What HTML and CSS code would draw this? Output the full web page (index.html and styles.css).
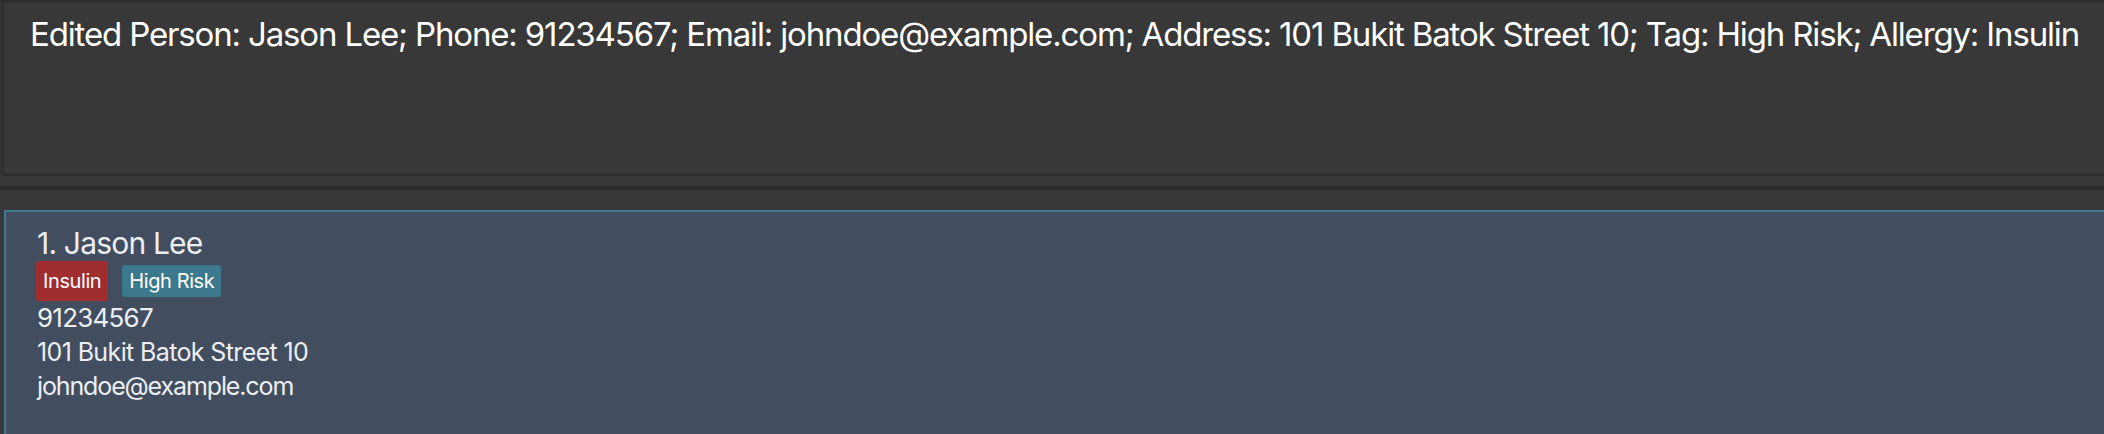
FILE: index.html
```html
<!DOCTYPE html>
<html>
<head>
<meta charset="utf-8">
<link rel="stylesheet" href="styles.css">
</head>
<body>
<div class="topline"></div>
<div class="result-area">
  <div class="result-box">
    <div class="result-text">Edited Person: Jason Lee; Phone: 91234567; Email: johndoe@example.com; Address: 101 Bukit Batok Street 10; Tag: High Risk; Allergy: Insulin</div>
  </div>
</div>
<div class="splitter"></div>
<div class="list-area">
  <div class="card">
    <div class="name">1. Jason Lee</div>
    <div class="tags">
      <span class="tag allergy">Insulin</span>
      <span class="tag risk">High Risk</span>
    </div>
    <div class="phone">91234567</div>
    <div class="field address">101 Bukit Batok Street 10</div>
    <div class="field email">johndoe@example.com</div>
  </div>
</div>
</body>
</html>
```
FILE: styles.css
```css
html, body {
  margin: 0;
  padding: 0;
  background: #383838;
  height: 100%;
  overflow: hidden;
}
body {
  font-family: Inter, "Open Sans", sans-serif;
  color: #ffffff;
}
.topline {
  height: 2px;
  background: #2b2b2b;
}
.result-area {
  padding-left: 3px;
  background: #333333;
}
.result-box {
  background: #383838;
  border-left: 1px solid #2b2b2b;
  border-bottom: 2px solid #2b2b2b;
  height: 172px;
  box-sizing: content-box;
  padding-left: 26px;
  padding-top: 0;
}
.result-text {
  padding-top: 12px;
  font-size: 33px;
  line-height: 40px;
  letter-spacing: -0.035em;
  white-space: nowrap;
  color: #ffffff;
}
.splitter {
  margin-top: 10px;
  height: 4px;
  background: #2a2a2a;
}
.list-area {
  padding-top: 20px;
  padding-left: 4px;
  background: #383838;
}
.card {
  background: #424e5f;
  border-top: 2px solid #3b7c90;
  border-left: 2px solid #3b7c90;
  padding: 13px 0 40px 31px;
  color: #eceef2;
}
.name {
  font-size: 30px;
  line-height: 36px;
  letter-spacing: -0.027em;
}
.tags {
  display: flex;
  align-items: center;
  gap: 14px;
  height: 40px;
  margin-left: -1px;
}
.tag {
  font-size: 20px;
  letter-spacing: -0.02em;
  color: #ffffff;
  border-radius: 3px;
  padding: 0 7px;
  display: flex;
  align-items: center;
}
.allergy {
  background: #a02e2f;
  height: 40px;
}
.risk {
  background: #3d798d;
  height: 32px;
}
.phone {
  font-size: 26px;
  line-height: 34px;
  letter-spacing: -0.03em;
}
.field {
  font-size: 25px;
  line-height: 34px;
  letter-spacing: -0.035em;
}
.address {
  letter-spacing: -0.025em;
}
.email {
  letter-spacing: -0.045em;
}
```
